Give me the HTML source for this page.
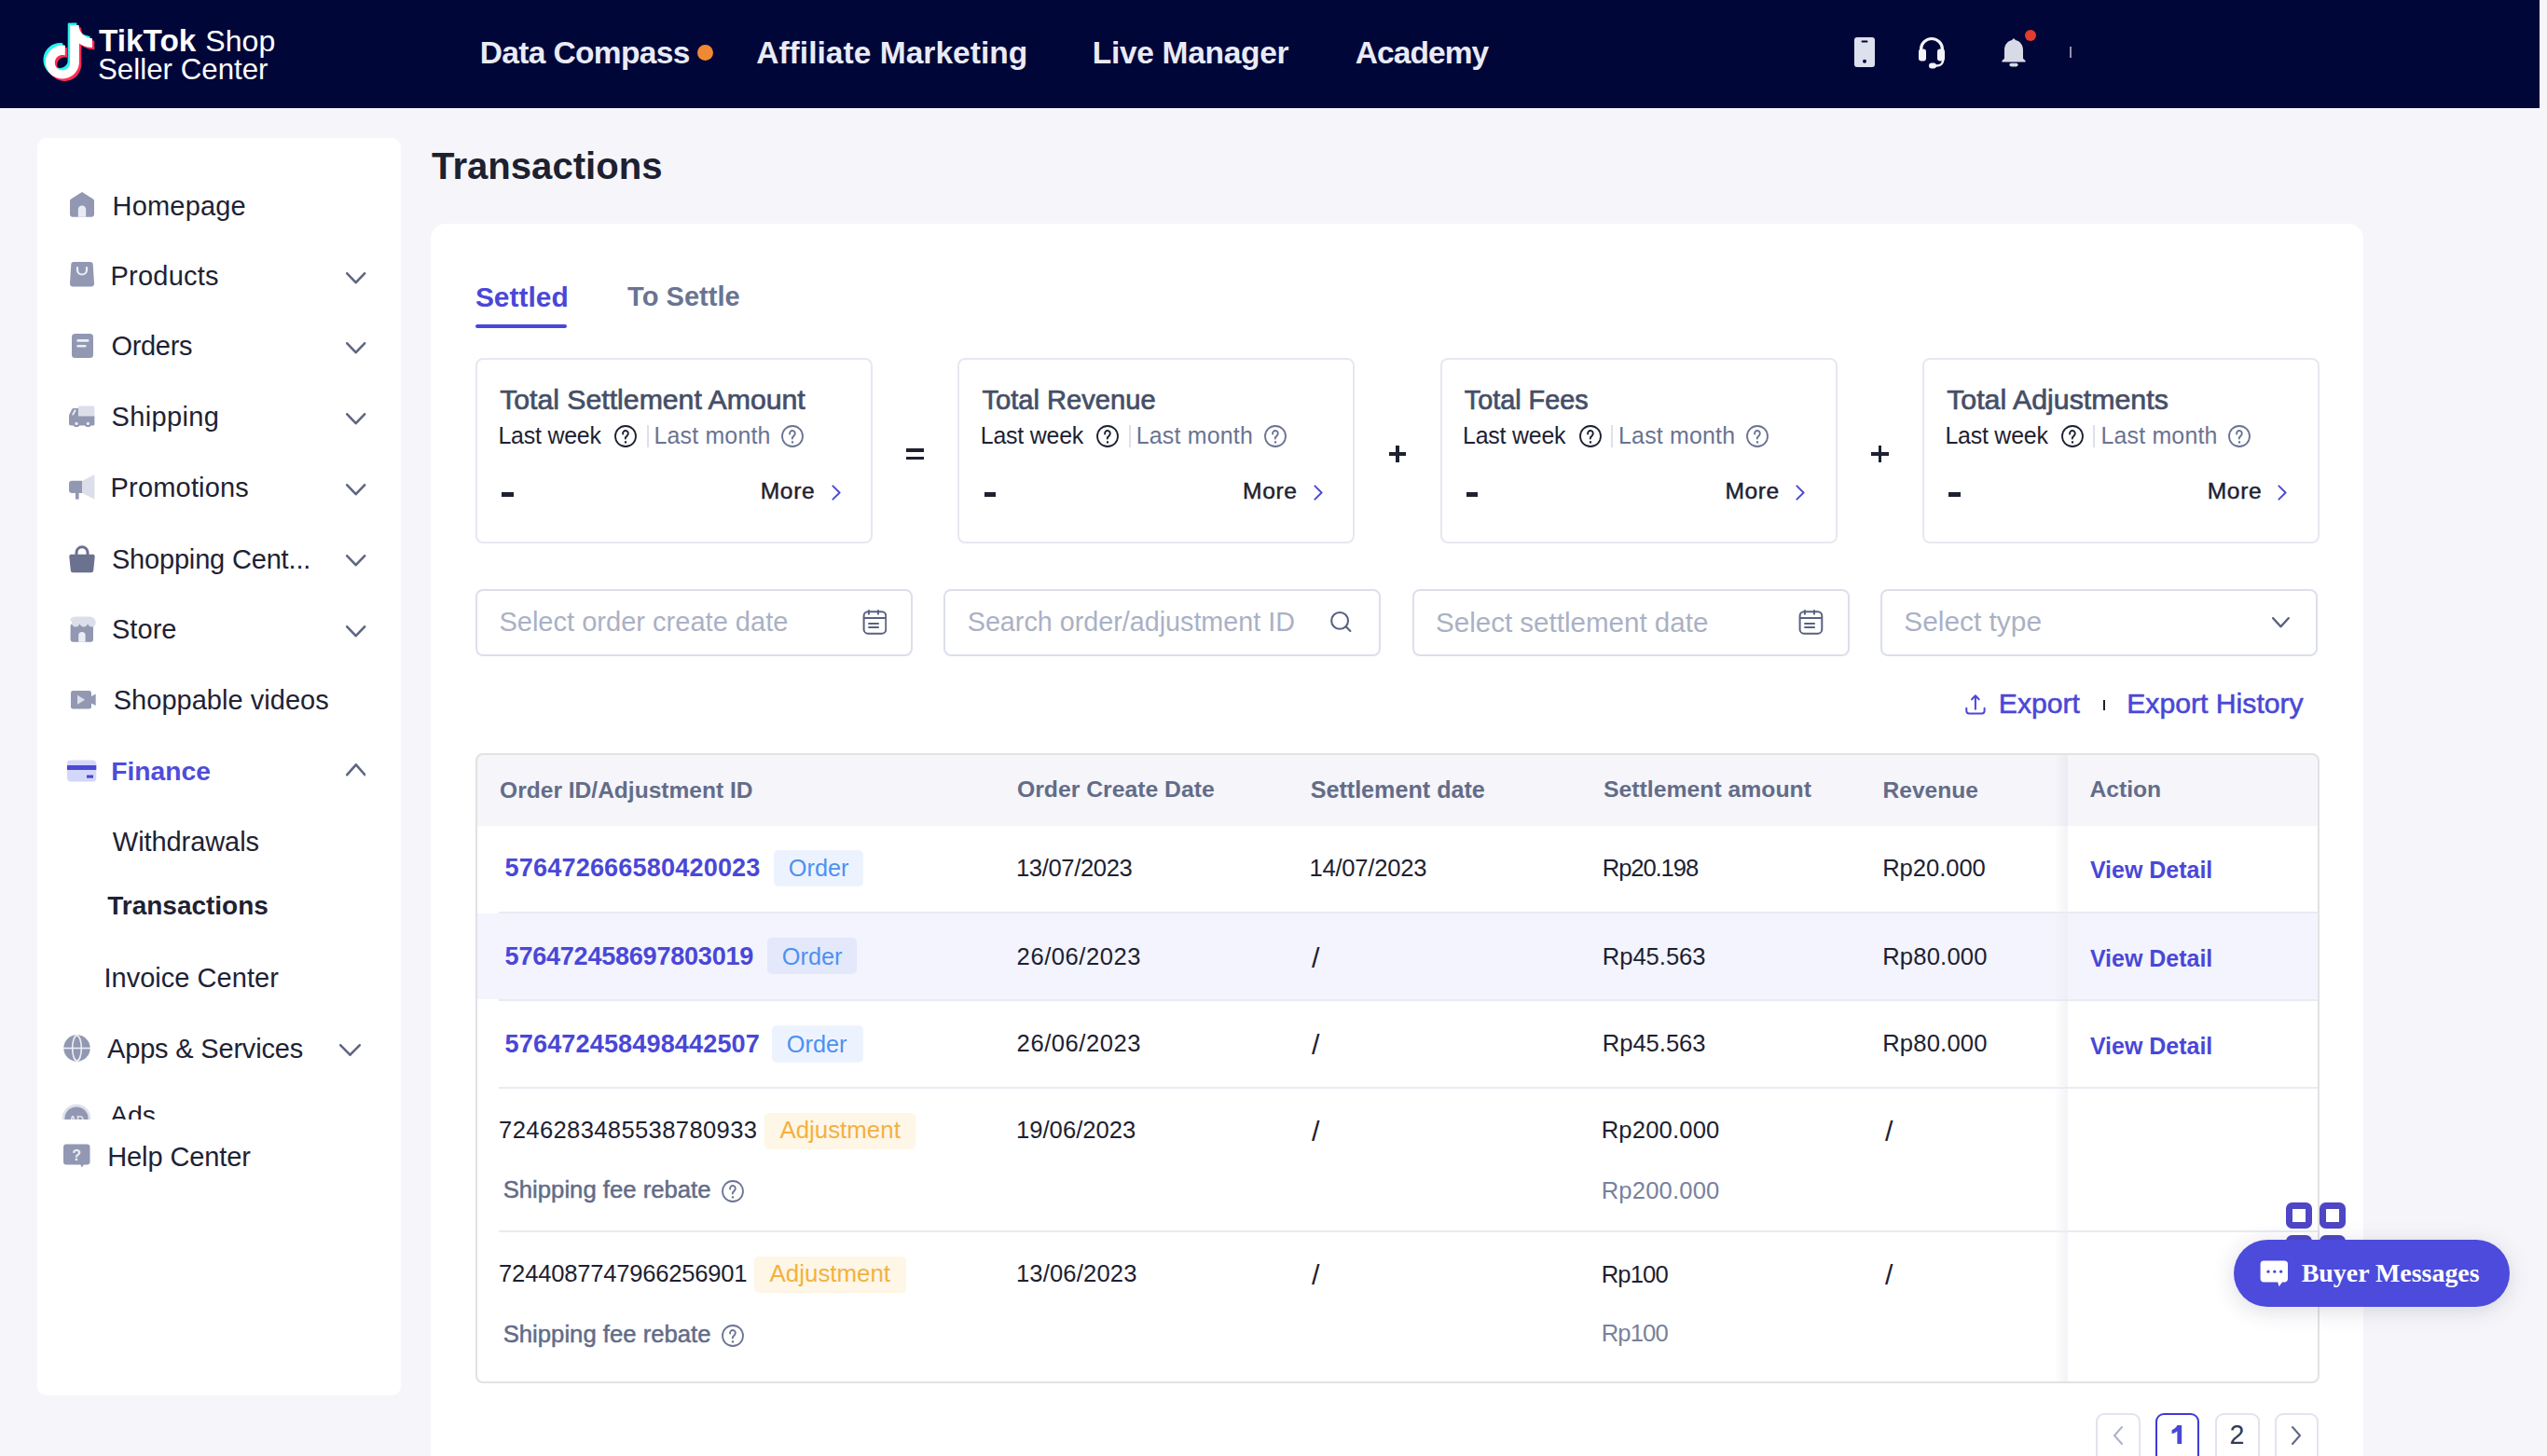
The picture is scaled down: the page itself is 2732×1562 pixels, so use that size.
<!DOCTYPE html>
<html><head><meta charset="utf-8"><title>Transactions</title>
<style>
html,body{margin:0;padding:0;}
html{background:#f6f6fa;}
body{width:2732px;height:1562px;position:relative;overflow:hidden;background:#f6f6fa;font-family:"Liberation Sans",sans-serif;}
.b{position:absolute;display:block;}
.t{position:absolute;white-space:pre;line-height:1;font-family:"Liberation Sans",sans-serif;}
@media (max-width:1500px){body{zoom:0.5;}}
</style></head><body>
<div class="b" style="left:0.00px;top:0.00px;width:2724.00px;height:116.00px;background:#010639"></div>
<svg class="b" style="left:36.00px;top:16.00px;" width="74.00" height="80.00" viewBox="0 0 74.00 80.00">
<g transform="translate(9.1,11)"><g transform="translate(-2.4,-2.4) scale(2.4)"><path d="M12.525.02c1.31-.02 2.61-.01 3.91-.02.08 1.53.63 3.09 1.75 4.17 1.12 1.11 2.7 1.62 4.24 1.79v4.03c-1.44-.05-2.89-.35-4.2-.97-.57-.26-1.1-.59-1.62-.93-.01 2.92.01 5.84-.02 8.75-.08 1.4-.54 2.79-1.35 3.94-1.31 1.92-3.58 3.17-5.91 3.21-1.43.08-2.86-.31-4.08-1.03-2.02-1.19-3.44-3.37-3.65-5.71-.02-.5-.03-1-.01-1.49.18-1.9 1.12-3.72 2.58-4.96 1.66-1.44 3.98-2.13 6.15-1.72.02 1.48-.04 2.96-.04 4.44-.99-.32-2.15-.23-3.02.37-.63.41-1.11 1.04-1.36 1.75-.21.51-.15 1.07-.14 1.61.24 1.64 1.82 3.02 3.5 2.87 1.12-.01 2.19-.66 2.77-1.61.19-.33.4-.67.41-1.06.1-1.79.06-3.57.07-5.36.01-4.03-.01-8.05.02-12.07z" fill="#25f4ee"/></g>
<g transform="translate(2.4,2.4) scale(2.4)"><path d="M12.525.02c1.31-.02 2.61-.01 3.91-.02.08 1.53.63 3.09 1.75 4.17 1.12 1.11 2.7 1.62 4.24 1.79v4.03c-1.44-.05-2.89-.35-4.2-.97-.57-.26-1.1-.59-1.62-.93-.01 2.92.01 5.84-.02 8.75-.08 1.4-.54 2.79-1.35 3.94-1.31 1.92-3.58 3.17-5.91 3.21-1.43.08-2.86-.31-4.08-1.03-2.02-1.19-3.44-3.37-3.65-5.71-.02-.5-.03-1-.01-1.49.18-1.9 1.12-3.72 2.58-4.96 1.66-1.44 3.98-2.13 6.15-1.72.02 1.48-.04 2.96-.04 4.44-.99-.32-2.15-.23-3.02.37-.63.41-1.11 1.04-1.36 1.75-.21.51-.15 1.07-.14 1.61.24 1.64 1.82 3.02 3.5 2.87 1.12-.01 2.19-.66 2.77-1.61.19-.33.4-.67.41-1.06.1-1.79.06-3.57.07-5.36.01-4.03-.01-8.05.02-12.07z" fill="#fe2c55"/></g>
<g transform="scale(2.4)"><path d="M12.525.02c1.31-.02 2.61-.01 3.91-.02.08 1.53.63 3.09 1.75 4.17 1.12 1.11 2.7 1.62 4.24 1.79v4.03c-1.44-.05-2.89-.35-4.2-.97-.57-.26-1.1-.59-1.62-.93-.01 2.92.01 5.84-.02 8.75-.08 1.4-.54 2.79-1.35 3.94-1.31 1.92-3.58 3.17-5.91 3.21-1.43.08-2.86-.31-4.08-1.03-2.02-1.19-3.44-3.37-3.65-5.71-.02-.5-.03-1-.01-1.49.18-1.9 1.12-3.72 2.58-4.96 1.66-1.44 3.98-2.13 6.15-1.72.02 1.48-.04 2.96-.04 4.44-.99-.32-2.15-.23-3.02.37-.63.41-1.11 1.04-1.36 1.75-.21.51-.15 1.07-.14 1.61.24 1.64 1.82 3.02 3.5 2.87 1.12-.01 2.19-.66 2.77-1.61.19-.33.4-.67.41-1.06.1-1.79.06-3.57.07-5.36.01-4.03-.01-8.05.02-12.07z" fill="#fff"/></g></g>
</svg>
<div class="t" style="left:106.07px;top:27.38px;font-size:33.33px;color:#ffffff;font-weight:700;">TikTok</div>
<div class="t" style="left:220.36px;top:28.43px;font-size:32.09px;color:#ffffff;">Shop</div>
<div class="t" style="left:104.99px;top:58.81px;font-size:31.29px;color:#ffffff;">Seller Center</div>
<div class="t" style="left:514.82px;top:39.94px;font-size:33.50px;color:#e9ebf6;font-weight:700;letter-spacing:-0.649px;">Data Compass</div>
<div class="b" style="left:747.5px;top:47.7px;width:17px;height:17px;border-radius:50%;background:#ef8a32"></div>
<div class="t" style="left:811.16px;top:39.94px;font-size:33.50px;color:#e9ebf6;font-weight:700;letter-spacing:0.041px;">Affiliate Marketing</div>
<div class="t" style="left:1171.82px;top:39.94px;font-size:33.50px;color:#e9ebf6;font-weight:700;letter-spacing:-0.308px;">Live Manager</div>
<div class="t" style="left:1453.66px;top:39.94px;font-size:33.50px;color:#e9ebf6;font-weight:700;letter-spacing:-0.900px;">Academy</div>
<svg class="b" style="left:1989.00px;top:40.00px;" width="22.00" height="32.00" viewBox="0 0 22.00 32.00"><rect x="0" y="0" width="22" height="32" rx="3" fill="#dde1ee"/><rect x="7.5" y="3.6" width="7" height="2" rx="1" fill="#010639"/><circle cx="11" cy="25.8" r="2" fill="#010639"/></svg>
<svg class="b" style="left:2056.00px;top:38.00px;" width="32.00" height="36.00" viewBox="0 0 32.00 36.00"><path d="M4.5 18 V15 a11.5 11.5 0 0 1 23 0 V18" fill="none" stroke="#f3f3f8" stroke-width="3.2"/>
<rect x="2" y="14.5" width="8" height="13" rx="3" fill="#f3f3f8"/><rect x="22" y="14.5" width="8" height="13" rx="3" fill="#f3f3f8"/>
<path d="M28.3 26 c0 4-3 6.5-7 6.5 h-3" fill="none" stroke="#f3f3f8" stroke-width="2.4"/><rect x="13" y="29.4" width="8" height="6" rx="3" fill="#f3f3f8"/></svg>
<svg class="b" style="left:2146.00px;top:40.00px;" width="28.00" height="32.00" viewBox="0 0 28.00 32.00"><path d="M14 1.5 c1 0 1.6.7 1.7 1.6 c5 1 8.3 5.2 8.3 10.5 v9.2 l2.4 2.2 c.6.6.2 1.6-.6 1.6 H2.2 c-.8 0-1.2-1-.6-1.6 L4 22.8 v-9.2 c0-5.3 3.3-9.5 8.3-10.5 c.1-.9.7-1.6 1.7-1.6z" fill="#d8dbe6"/><rect x="9.4" y="27.8" width="9.2" height="3.6" rx="1.8" fill="#d8dbe6"/></svg>
<div class="b" style="left:2172px;top:31.9px;width:12px;height:12px;border-radius:50%;background:#e23c30"></div>
<div class="b" style="left:2220.00px;top:50.20px;width:2.00px;height:11.60px;background:#8e93ab"></div>
<div class="b" style="left:40.00px;top:148.00px;width:390.00px;height:1349.00px;background:#fff;border-radius:10px"></div>
<svg class="b" style="left:75.00px;top:205.00px;" width="26.00" height="28.00" viewBox="0 0 26.00 28.00"><path d="M13 1 L24.5 8.3 c1 .6 1.5 1.4 1.5 2.6 V25 c0 1.6-1.2 2.8-2.8 2.8 H2.8 C1.2 27.8 0 26.6 0 25 V10.9 c0-1.2.5-2 1.5-2.6z" fill="#9298b2"/><path d="M8.8 27.8 V19.8 a4.2 4.2 0 0 1 8.4 0 V27.8z" fill="#e8ebf5"/></svg>
<div class="t" style="left:120.58px;top:206.65px;font-size:29.00px;color:#1e2233;letter-spacing:0.174px;">Homepage</div>
<svg class="b" style="left:75.00px;top:281.00px;" width="26.00" height="27.00" viewBox="0 0 26.00 27.00"><path d="M4 0 H22 c1.6 0 2.6 1 2.7 2.5 L26 23 c.1 2-1.2 3.5-3.2 3.5 H3.2 C1.2 26.5-.1 25 0 23 L1.3 2.5 C1.4 1 2.4 0 4 0z" fill="#9298b2"/><path d="M8 6 v2.5 a5 5 0 0 0 10 0 V6" fill="none" stroke="#eceef6" stroke-width="2.2" stroke-linecap="round"/></svg>
<div class="t" style="left:118.58px;top:281.65px;font-size:29.00px;color:#1e2233;letter-spacing:0.204px;">Products</div>
<svg class="b" style="left:371.30px;top:292.00px;" width="21.40" height="12.50" viewBox="0 0 21.40 12.50"><path d="M1.3 1.3 L10.699999999999989 11.2 L20.099999999999977 1.3" fill="none" stroke="#5f6682" stroke-width="2.6" stroke-linecap="round" stroke-linejoin="round"/></svg>
<svg class="b" style="left:76.50px;top:358.00px;" width="23.00" height="26.00" viewBox="0 0 23.00 26.00"><rect x="0" y="0" width="23" height="26" rx="3.5" fill="#9298b2"/><path d="M6.6 7.4 H17.2 M6.6 13.2 H14.3" stroke="#eceef6" stroke-width="2.6" stroke-linecap="round"/></svg>
<div class="t" style="left:119.59px;top:356.65px;font-size:29.00px;color:#1e2233;letter-spacing:-0.355px;">Orders</div>
<svg class="b" style="left:371.30px;top:367.00px;" width="21.40" height="12.50" viewBox="0 0 21.40 12.50"><path d="M1.3 1.3 L10.699999999999989 11.2 L20.099999999999977 1.3" fill="none" stroke="#5f6682" stroke-width="2.6" stroke-linecap="round" stroke-linejoin="round"/></svg>
<svg class="b" style="left:74.00px;top:435.00px;" width="28.00" height="24.00" viewBox="0 0 28.00 24.00"><rect x="9.8" y="0.6" width="17.6" height="12" rx="2.4" fill="#dcdfea"/><path d="M5 3 H10 V11.5 H27.4 V20 c0 .8-.6 1.5-1.4 1.5 H2 C.9 21.5 0 20.6 0 19.5 V11 c0-.6.2-1.2.5-1.8 L3.2 4 C3.6 3.3 4.2 3 5 3z" fill="#9298b2"/><circle cx="8" cy="19.4" r="3.6" fill="#9298b2" stroke="#fff" stroke-width="0"/><circle cx="20.4" cy="19.4" r="3.6" fill="#9298b2"/><circle cx="8" cy="19.4" r="1.6" fill="#eceef6"/><circle cx="20.4" cy="19.4" r="1.6" fill="#eceef6"/><path d="M4.2 9.6 L6.6 5.2" stroke="#eceef6" stroke-width="1.8" stroke-linecap="round"/></svg>
<div class="t" style="left:119.59px;top:433.45px;font-size:29.00px;color:#1e2233;letter-spacing:0.340px;">Shipping</div>
<svg class="b" style="left:371.30px;top:443.00px;" width="21.40" height="12.50" viewBox="0 0 21.40 12.50"><path d="M1.3 1.3 L10.699999999999989 11.2 L20.099999999999977 1.3" fill="none" stroke="#5f6682" stroke-width="2.6" stroke-linecap="round" stroke-linejoin="round"/></svg>
<svg class="b" style="left:74.00px;top:509.00px;" width="28.00" height="27.00" viewBox="0 0 28.00 27.00"><path d="M14 7 L27.4 0 V26.6 L14 20z" fill="#dcdfea"/><path d="M3 6.8 H14 V20 H3 c-1.6 0-3-1.3-3-3 V9.8 C0 8.1 1.4 6.8 3 6.8z" fill="#9298b2"/><rect x="7" y="20" width="3.6" height="6.6" fill="#9298b2"/></svg>
<div class="t" style="left:118.58px;top:509.05px;font-size:29.00px;color:#1e2233;letter-spacing:0.177px;">Promotions</div>
<svg class="b" style="left:371.30px;top:519.00px;" width="21.40" height="12.50" viewBox="0 0 21.40 12.50"><path d="M1.3 1.3 L10.699999999999989 11.2 L20.099999999999977 1.3" fill="none" stroke="#5f6682" stroke-width="2.6" stroke-linecap="round" stroke-linejoin="round"/></svg>
<svg class="b" style="left:74.00px;top:585.00px;" width="28.00" height="30.00" viewBox="0 0 28.00 30.00"><path d="M8 10 V7.8 a6 6 0 0 1 12 0 V10" fill="none" stroke="#6b7290" stroke-width="3"/><path d="M2.3 9.8 H25.7 c1.3 0 2.2 1.1 2 2.4 L26.2 27 c-.2 1.3-1.2 2.3-2.5 2.3 H4.3 c-1.3 0-2.3-1-2.5-2.3 L.3 12.2 C.1 10.9 1 9.8 2.3 9.8z" fill="#6b7290"/></svg>
<div class="t" style="left:119.89px;top:585.65px;font-size:29.00px;color:#1e2233;letter-spacing:-0.173px;">Shopping Cent...</div>
<svg class="b" style="left:371.30px;top:595.00px;" width="21.40" height="12.50" viewBox="0 0 21.40 12.50"><path d="M1.3 1.3 L10.699999999999989 11.2 L20.099999999999977 1.3" fill="none" stroke="#5f6682" stroke-width="2.6" stroke-linecap="round" stroke-linejoin="round"/></svg>
<svg class="b" style="left:73.00px;top:661.00px;" width="30.00" height="28.00" viewBox="0 0 30.00 28.00"><rect x="2.6" y="8" width="24.4" height="19.8" rx="3" fill="#9298b2"/><path d="M7 0.4 H23 c3 0 6 2.8 6 5.8 V7.2 a4.3 4.3 0 0 1-8.6 0 a4.3 4.3 0 0 1-8.6 0 a4.3 4.3 0 0 1-8.6 0 V6.2 C-.2 3.2 3.5 0.4 7 0.4z" fill="#dcdfea" transform="translate(.7,0)"/><path d="M11.2 27.8 V20.8 a3.7 3.7 0 0 1 7.4 0 V27.8z" fill="#eceef6"/></svg>
<div class="t" style="left:119.89px;top:661.15px;font-size:29.00px;color:#1e2233;letter-spacing:0.075px;">Store</div>
<svg class="b" style="left:371.30px;top:671.00px;" width="21.40" height="12.50" viewBox="0 0 21.40 12.50"><path d="M1.3 1.3 L10.699999999999989 11.2 L20.099999999999977 1.3" fill="none" stroke="#5f6682" stroke-width="2.6" stroke-linecap="round" stroke-linejoin="round"/></svg>
<svg class="b" style="left:76.00px;top:741.00px;" width="27.00" height="20.00" viewBox="0 0 27.00 20.00"><rect x="0" y="0" width="22" height="19.6" rx="2.4" fill="#9298b2"/><path d="M22 6 L26.7 3.6 V16 L22 13.6z" fill="#9298b2"/><path d="M7 4.8 L15.2 9.8 L7 14.8z" fill="#dcdfea"/></svg>
<div class="t" style="left:121.69px;top:736.65px;font-size:29.00px;color:#1e2233;letter-spacing:0.031px;">Shoppable videos</div>
<svg class="b" style="left:72.00px;top:815.00px;" width="32.00" height="24.00" viewBox="0 0 32.00 24.00"><rect x="0" y="0.5" width="31.3" height="23" rx="4" fill="#d3d7fa"/><rect x="0" y="6" width="31.3" height="5" fill="#4a47d7"/><rect x="21" y="16.5" width="7" height="3.2" fill="#4a47d7"/></svg>
<div class="t" style="left:119.16px;top:812.77px;font-size:28.26px;color:#4f4cdb;font-weight:700;">Finance</div>
<svg class="b" style="left:370.80px;top:819.00px;" width="21.70" height="13.50" viewBox="0 0 21.70 13.50"><path d="M1.3 12.2 L10.849999999999994 1.3 L20.399999999999988 12.2" fill="none" stroke="#5f6682" stroke-width="2.6" stroke-linecap="round" stroke-linejoin="round"/></svg>
<div class="t" style="left:120.86px;top:888.65px;font-size:29.00px;color:#1e2233;letter-spacing:-0.075px;">Withdrawals</div>
<div class="t" style="left:115.22px;top:958.00px;font-size:27.99px;color:#1e2233;font-weight:700;">Transactions</div>
<div class="t" style="left:111.39px;top:1035.35px;font-size:29.00px;color:#1e2233;letter-spacing:0.034px;">Invoice Center</div>
<svg class="b" style="left:67.50px;top:1109.50px;" width="29.00" height="29.00" viewBox="0 0 29.00 29.00"><circle cx="14.5" cy="14.5" r="14.2" fill="#9298b2"/><path d="M0 14.5 H29" stroke="#eceef6" stroke-width="1.6"/><ellipse cx="14.5" cy="14.5" rx="4.8" ry="13.6" fill="none" stroke="#eceef6" stroke-width="1.6"/></svg>
<div class="t" style="left:115.10px;top:1110.65px;font-size:29.00px;color:#1e2233;letter-spacing:-0.193px;">Apps & Services</div>
<svg class="b" style="left:364.00px;top:1120.00px;" width="23.00" height="13.00" viewBox="0 0 23.00 13.00"><path d="M1.3 1.3 L11.5 11.7 L21.7 1.3" fill="none" stroke="#5f6682" stroke-width="2.6" stroke-linecap="round" stroke-linejoin="round"/></svg>
<div class="b" style="left:40px;top:1180px;width:390px;height:20.8px;overflow:hidden">
<svg class="b" style="left:26.00px;top:3.80px;" width="32.00" height="32.20" viewBox="0 0 32.00 32.20"><circle cx="16" cy="16" r="15.4" fill="#dfe2ee"/><circle cx="16" cy="16" r="12.6" fill="#9298b2"/><text x="16" y="21" font-size="11" font-weight="700" fill="#dfe2ee" text-anchor="middle" font-family="Liberation Sans">AD</text></svg>
<div class="t" style="left:78px;top:1.5px;font-size:28.5px;color:#1e2233">Ads</div>
</div>
<svg class="b" style="left:67.50px;top:1227.00px;" width="29.00" height="26.00" viewBox="0 0 29.00 26.00"><path d="M3 0.5 H25.5 c1.7 0 3 1.3 3 3 V19.5 c0 1.7-1.3 3-3 3 H22 L19.5 25.5 L18.5 22.5 H3 c-1.7 0-3-1.3-3-3 V3.5 C0 1.8 1.3.5 3 .5z" fill="#9298b2"/><text x="14.2" y="17.5" font-size="16" font-weight="700" fill="#eceef6" text-anchor="middle" font-family="Liberation Sans">?</text></svg>
<div class="t" style="left:115.18px;top:1226.65px;font-size:29.00px;color:#1e2233;letter-spacing:-0.096px;">Help Center</div>
<div class="t" style="left:463.10px;top:158.34px;font-size:40.11px;color:#1d2130;font-weight:700;">Transactions</div>
<div class="b" style="left:462.00px;top:240.00px;width:2073.00px;height:1460.00px;background:#fff;border-radius:16px"></div>
<div class="t" style="left:509.90px;top:303.65px;font-size:29.94px;color:#4a47d7;font-weight:700;">Settled</div>
<div class="b" style="left:510.00px;top:348.00px;width:98.00px;height:4.00px;background:#4a47d7;border-radius:2px"></div>
<div class="t" style="left:673.11px;top:304.38px;font-size:29.07px;color:#6a7491;font-weight:700;">To Settle</div>
<div class="b" style="left:510.00px;top:384.00px;width:426.00px;height:199.00px;border:2px solid #e6e8f0;border-radius:8px;box-sizing:border-box"></div>
<div class="t" style="left:536.15px;top:413.90px;font-size:30.23px;color:#454e67;-webkit-text-stroke:0.7px #454e67;">Total Settlement Amount</div>
<div class="t" style="left:534.41px;top:455.12px;font-size:24.90px;color:#1d2130;letter-spacing:-0.198px;">Last week</div>
<svg class="b" style="left:658.90px;top:455.80px;" width="24.00" height="24.00" viewBox="0 0 24.00 24.00"><circle cx="12.0" cy="12.0" r="11.0" fill="none" stroke="#1d2130" stroke-width="1.8"/><path d="M9.12 9.60 a2.88 2.88 0 1 1 4.80 1.44 c-.4 .9-1.3 1.3-1.8 2.1 -.3.4-.3.8-.3 1.4" fill="none" stroke="#1d2130" stroke-width="1.9" stroke-linecap="round"/><rect x="10.90" y="17.28" width="2.2" height="2.2" fill="#1d2130"/></svg>
<div class="b" style="left:693.50px;top:456.20px;width:2.00px;height:23.50px;background:#dde0ee"></div>
<div class="t" style="left:701.41px;top:455.12px;font-size:24.90px;color:#6a7391;letter-spacing:0.209px;">Last month</div>
<svg class="b" style="left:838.20px;top:455.80px;" width="24.00" height="24.00" viewBox="0 0 24.00 24.00"><circle cx="12.0" cy="12.0" r="11.0" fill="none" stroke="#6a7391" stroke-width="1.8"/><path d="M9.12 9.60 a2.88 2.88 0 1 1 4.80 1.44 c-.4 .9-1.3 1.3-1.8 2.1 -.3.4-.3.8-.3 1.4" fill="none" stroke="#6a7391" stroke-width="1.9" stroke-linecap="round"/><rect x="10.90" y="17.28" width="2.2" height="2.2" fill="#6a7391"/></svg>
<div class="b" style="left:538.40px;top:528.00px;width:12.30px;height:5.00px;background:#1d2130"></div>
<div class="t" style="left:815.76px;top:515.07px;font-size:24.60px;color:#1d2130;-webkit-text-stroke:0.45px #1d2130;letter-spacing:0.620px;">More</div>
<svg class="b" style="left:891.50px;top:519.50px;" width="10.00" height="17.00" viewBox="0 0 10.00 17.00"><path d="M1.4 1.3 L8.6 8.5 L1.4 15.7" fill="none" stroke="#4a47d7" stroke-width="1.9" stroke-linecap="round" stroke-linejoin="round"/></svg>
<div class="b" style="left:1027.00px;top:384.00px;width:426.00px;height:199.00px;border:2px solid #e6e8f0;border-radius:8px;box-sizing:border-box"></div>
<div class="t" style="left:1053.50px;top:414.86px;font-size:29.11px;color:#454e67;-webkit-text-stroke:0.7px #454e67;">Total Revenue</div>
<div class="t" style="left:1051.74px;top:455.12px;font-size:24.90px;color:#1d2130;letter-spacing:-0.198px;">Last week</div>
<svg class="b" style="left:1176.23px;top:455.80px;" width="24.00" height="24.00" viewBox="0 0 24.00 24.00"><circle cx="12.0" cy="12.0" r="11.0" fill="none" stroke="#1d2130" stroke-width="1.8"/><path d="M9.12 9.60 a2.88 2.88 0 1 1 4.80 1.44 c-.4 .9-1.3 1.3-1.8 2.1 -.3.4-.3.8-.3 1.4" fill="none" stroke="#1d2130" stroke-width="1.9" stroke-linecap="round"/><rect x="10.90" y="17.28" width="2.2" height="2.2" fill="#1d2130"/></svg>
<div class="b" style="left:1210.83px;top:456.20px;width:2.00px;height:23.50px;background:#dde0ee"></div>
<div class="t" style="left:1218.74px;top:455.12px;font-size:24.90px;color:#6a7391;letter-spacing:0.209px;">Last month</div>
<svg class="b" style="left:1355.53px;top:455.80px;" width="24.00" height="24.00" viewBox="0 0 24.00 24.00"><circle cx="12.0" cy="12.0" r="11.0" fill="none" stroke="#6a7391" stroke-width="1.8"/><path d="M9.12 9.60 a2.88 2.88 0 1 1 4.80 1.44 c-.4 .9-1.3 1.3-1.8 2.1 -.3.4-.3.8-.3 1.4" fill="none" stroke="#6a7391" stroke-width="1.9" stroke-linecap="round"/><rect x="10.90" y="17.28" width="2.2" height="2.2" fill="#6a7391"/></svg>
<div class="b" style="left:1055.73px;top:528.00px;width:12.30px;height:5.00px;background:#1d2130"></div>
<div class="t" style="left:1333.09px;top:515.07px;font-size:24.60px;color:#1d2130;-webkit-text-stroke:0.45px #1d2130;letter-spacing:0.620px;">More</div>
<svg class="b" style="left:1408.83px;top:519.50px;" width="10.00" height="17.00" viewBox="0 0 10.00 17.00"><path d="M1.4 1.3 L8.6 8.5 L1.4 15.7" fill="none" stroke="#4a47d7" stroke-width="1.9" stroke-linecap="round" stroke-linejoin="round"/></svg>
<div class="b" style="left:1545.00px;top:384.00px;width:426.00px;height:199.00px;border:2px solid #e6e8f0;border-radius:8px;box-sizing:border-box"></div>
<div class="t" style="left:1570.83px;top:415.12px;font-size:28.79px;color:#454e67;-webkit-text-stroke:0.7px #454e67;">Total Fees</div>
<div class="t" style="left:1569.07px;top:455.12px;font-size:24.90px;color:#1d2130;letter-spacing:-0.198px;">Last week</div>
<svg class="b" style="left:1693.56px;top:455.80px;" width="24.00" height="24.00" viewBox="0 0 24.00 24.00"><circle cx="12.0" cy="12.0" r="11.0" fill="none" stroke="#1d2130" stroke-width="1.8"/><path d="M9.12 9.60 a2.88 2.88 0 1 1 4.80 1.44 c-.4 .9-1.3 1.3-1.8 2.1 -.3.4-.3.8-.3 1.4" fill="none" stroke="#1d2130" stroke-width="1.9" stroke-linecap="round"/><rect x="10.90" y="17.28" width="2.2" height="2.2" fill="#1d2130"/></svg>
<div class="b" style="left:1728.16px;top:456.20px;width:2.00px;height:23.50px;background:#dde0ee"></div>
<div class="t" style="left:1736.07px;top:455.12px;font-size:24.90px;color:#6a7391;letter-spacing:0.209px;">Last month</div>
<svg class="b" style="left:1872.86px;top:455.80px;" width="24.00" height="24.00" viewBox="0 0 24.00 24.00"><circle cx="12.0" cy="12.0" r="11.0" fill="none" stroke="#6a7391" stroke-width="1.8"/><path d="M9.12 9.60 a2.88 2.88 0 1 1 4.80 1.44 c-.4 .9-1.3 1.3-1.8 2.1 -.3.4-.3.8-.3 1.4" fill="none" stroke="#6a7391" stroke-width="1.9" stroke-linecap="round"/><rect x="10.90" y="17.28" width="2.2" height="2.2" fill="#6a7391"/></svg>
<div class="b" style="left:1573.06px;top:528.00px;width:12.30px;height:5.00px;background:#1d2130"></div>
<div class="t" style="left:1850.42px;top:515.07px;font-size:24.60px;color:#1d2130;-webkit-text-stroke:0.45px #1d2130;letter-spacing:0.620px;">More</div>
<svg class="b" style="left:1926.16px;top:519.50px;" width="10.00" height="17.00" viewBox="0 0 10.00 17.00"><path d="M1.4 1.3 L8.6 8.5 L1.4 15.7" fill="none" stroke="#4a47d7" stroke-width="1.9" stroke-linecap="round" stroke-linejoin="round"/></svg>
<div class="b" style="left:2062.00px;top:384.00px;width:426.00px;height:199.00px;border:2px solid #e6e8f0;border-radius:8px;box-sizing:border-box"></div>
<div class="t" style="left:2088.13px;top:413.81px;font-size:30.34px;color:#454e67;-webkit-text-stroke:0.7px #454e67;">Total Adjustments</div>
<div class="t" style="left:2086.40px;top:455.12px;font-size:24.90px;color:#1d2130;letter-spacing:-0.198px;">Last week</div>
<svg class="b" style="left:2210.89px;top:455.80px;" width="24.00" height="24.00" viewBox="0 0 24.00 24.00"><circle cx="12.0" cy="12.0" r="11.0" fill="none" stroke="#1d2130" stroke-width="1.8"/><path d="M9.12 9.60 a2.88 2.88 0 1 1 4.80 1.44 c-.4 .9-1.3 1.3-1.8 2.1 -.3.4-.3.8-.3 1.4" fill="none" stroke="#1d2130" stroke-width="1.9" stroke-linecap="round"/><rect x="10.90" y="17.28" width="2.2" height="2.2" fill="#1d2130"/></svg>
<div class="b" style="left:2245.49px;top:456.20px;width:2.00px;height:23.50px;background:#dde0ee"></div>
<div class="t" style="left:2253.40px;top:455.12px;font-size:24.90px;color:#6a7391;letter-spacing:0.209px;">Last month</div>
<svg class="b" style="left:2390.19px;top:455.80px;" width="24.00" height="24.00" viewBox="0 0 24.00 24.00"><circle cx="12.0" cy="12.0" r="11.0" fill="none" stroke="#6a7391" stroke-width="1.8"/><path d="M9.12 9.60 a2.88 2.88 0 1 1 4.80 1.44 c-.4 .9-1.3 1.3-1.8 2.1 -.3.4-.3.8-.3 1.4" fill="none" stroke="#6a7391" stroke-width="1.9" stroke-linecap="round"/><rect x="10.90" y="17.28" width="2.2" height="2.2" fill="#6a7391"/></svg>
<div class="b" style="left:2090.39px;top:528.00px;width:12.30px;height:5.00px;background:#1d2130"></div>
<div class="t" style="left:2367.75px;top:515.07px;font-size:24.60px;color:#1d2130;-webkit-text-stroke:0.45px #1d2130;letter-spacing:0.620px;">More</div>
<svg class="b" style="left:2443.49px;top:519.50px;" width="10.00" height="17.00" viewBox="0 0 10.00 17.00"><path d="M1.4 1.3 L8.6 8.5 L1.4 15.7" fill="none" stroke="#4a47d7" stroke-width="1.9" stroke-linecap="round" stroke-linejoin="round"/></svg>
<div class="b" style="left:972.30px;top:481.00px;width:18.50px;height:3.50px;background:#1d2130"></div>
<div class="b" style="left:972.30px;top:489.90px;width:18.50px;height:3.50px;background:#1d2130"></div>
<div class="b" style="left:1489.60px;top:485.20px;width:18.80px;height:3.60px;background:#1d2130"></div>
<div class="b" style="left:1497.20px;top:477.60px;width:3.60px;height:18.90px;background:#1d2130"></div>
<div class="b" style="left:2007.10px;top:485.20px;width:18.80px;height:3.60px;background:#1d2130"></div>
<div class="b" style="left:2014.70px;top:477.60px;width:3.60px;height:18.90px;background:#1d2130"></div>
<div class="b" style="left:510.00px;top:632.00px;width:469.00px;height:72.00px;border:2px solid #dcdfec;border-radius:8px;box-sizing:border-box"></div>
<div class="t" style="left:535.39px;top:653.10px;font-size:29.05px;color:#aab1c5;">Select order create date</div>
<svg class="b" style="left:924.60px;top:653.00px;" width="26.40" height="28.00" viewBox="0 0 26.40 28.00"><rect x="1.6" y="3.2" width="23.7" height="23.5" rx="4.5" fill="none" stroke="#5a6180" stroke-width="2"/><path d="M1.6 9.9 H25.3 M6.9 1.2 V6.6 M16.9 1.2 V6.6 M6.3 15.9 H17.8 M6.3 19.9 H17.8" stroke="#5a6180" stroke-width="2"/></svg>
<div class="b" style="left:1012.00px;top:632.00px;width:469.00px;height:72.00px;border:2px solid #dcdfec;border-radius:8px;box-sizing:border-box"></div>
<div class="t" style="left:1037.74px;top:653.38px;font-size:28.73px;color:#aab1c5;">Search order/adjustment ID</div>
<svg class="b" style="left:1425.33px;top:654.00px;" width="27.00" height="28.00" viewBox="0 0 27.00 28.00"><circle cx="12.1" cy="11.9" r="8.9" fill="none" stroke="#5a6180" stroke-width="2.1"/><path d="M19 18.6 L23.4 23" stroke="#5a6180" stroke-width="2.1" stroke-linecap="round"/></svg>
<div class="b" style="left:1515.00px;top:632.00px;width:469.00px;height:72.00px;border:2px solid #dcdfec;border-radius:8px;box-sizing:border-box"></div>
<div class="t" style="left:1540.03px;top:652.67px;font-size:29.56px;color:#aab1c5;">Select settlement date</div>
<svg class="b" style="left:1929.26px;top:653.00px;" width="26.40" height="28.00" viewBox="0 0 26.40 28.00"><rect x="1.6" y="3.2" width="23.7" height="23.5" rx="4.5" fill="none" stroke="#5a6180" stroke-width="2"/><path d="M1.6 9.9 H25.3 M6.9 1.2 V6.6 M16.9 1.2 V6.6 M6.3 15.9 H17.8 M6.3 19.9 H17.8" stroke="#5a6180" stroke-width="2"/></svg>
<div class="b" style="left:2017.00px;top:632.00px;width:469.00px;height:72.00px;border:2px solid #dcdfec;border-radius:8px;box-sizing:border-box"></div>
<div class="t" style="left:2042.35px;top:652.43px;font-size:29.85px;color:#aab1c5;">Select type</div>
<svg class="b" style="left:2436.69px;top:662.40px;" width="18.90" height="11.40" viewBox="0 0 18.90 11.40"><path d="M1.2 1.2 L9.450000000000045 10.199999999999978 L17.70000000000009 1.2" fill="none" stroke="#5a6180" stroke-width="2.4" stroke-linecap="round" stroke-linejoin="round"/></svg>
<svg class="b" style="left:2107.00px;top:744.00px;" width="25.00" height="24.00" viewBox="0 0 25.00 24.00"><path d="M11.9 2.3 V16.8 M8 6.2 L11.9 2.3 L15.7 6.2" fill="none" stroke="#4a47d7" stroke-width="2" stroke-linecap="round" stroke-linejoin="round"/><path d="M2.3 15.7 V18.5 c0 1.7 1.3 3 3 3 H18.6 c1.7 0 3-1.3 3-3 V15.7" fill="none" stroke="#4a47d7" stroke-width="2" stroke-linecap="round"/></svg>
<div class="t" style="left:2143.76px;top:739.73px;font-size:30.20px;color:#4a47d7;-webkit-text-stroke:0.55px #4a47d7;">Export</div>
<div class="b" style="left:2256.00px;top:750.70px;width:2.40px;height:11.30px;background:#1d2130"></div>
<div class="t" style="left:2281.16px;top:739.74px;font-size:30.19px;color:#4a47d7;-webkit-text-stroke:0.55px #4a47d7;">Export History</div>
<div class="b" style="left:510px;top:808px;width:1978px;height:676px;border-radius:8px;overflow:hidden;background:#fff">
<div class="b" style="left:0;top:0;width:100%;height:77.50px;background:#f5f5fa"></div>
<div class="b" style="left:0;top:172px;width:100%;height:92px;background:#f3f4fd"></div>
<div class="b" style="left:25.00px;top:170.00px;width:1953.00px;height:2px;background:#e9ebf2"></div>
<div class="b" style="left:25.00px;top:263.50px;width:1953.00px;height:2px;background:#e9ebf2"></div>
<div class="b" style="left:25.00px;top:357.50px;width:1953.00px;height:2px;background:#e9ebf2"></div>
<div class="b" style="left:25.00px;top:512.00px;width:1953.00px;height:2px;background:#e9ebf2"></div>
<div class="b" style="left:1693.00px;top:77.5px;width:15px;height:598.50px;background:linear-gradient(90deg,rgba(235,236,242,0),rgba(235,236,242,.6))"></div>
<div class="b" style="left:1693.00px;top:0px;width:15px;height:77.5px;background:linear-gradient(90deg,rgba(228,229,238,0),rgba(228,229,238,.6))"></div>
</div>
<div class="b" style="left:510.00px;top:808.00px;width:1978.00px;height:676.00px;border:2px solid #e2e2e4;border-radius:8px;box-sizing:border-box"></div>
<div class="t" style="left:536.12px;top:835.60px;font-size:24.56px;color:#636c89;font-weight:700;">Order ID/Adjustment ID</div>
<div class="t" style="left:1090.91px;top:835.44px;font-size:24.75px;color:#636c89;font-weight:700;">Order Create Date</div>
<div class="t" style="left:1405.65px;top:835.11px;font-size:25.15px;color:#636c89;font-weight:700;">Settlement date</div>
<div class="t" style="left:1720.06px;top:835.42px;font-size:24.78px;color:#636c89;font-weight:700;">Settlement amount</div>
<div class="t" style="left:2019.60px;top:835.61px;font-size:24.55px;color:#636c89;font-weight:700;">Revenue</div>
<div class="t" style="left:2241.38px;top:835.49px;font-size:24.69px;color:#636c89;font-weight:700;">Action</div>
<div class="t" style="left:541.59px;top:917.25px;font-size:27.10px;color:#4a47d7;font-weight:700;letter-spacing:0.152px;">576472666580420023</div>
<div class="b" style="left:830.40px;top:912.30px;width:96.10px;height:39.20px;background:#edf3fe;border-radius:5px"></div>
<div class="t" style="left:845.86px;top:918.82px;font-size:25.25px;color:#4d90f2;">Order</div>
<div class="t" style="left:1089.98px;top:918.52px;font-size:25.60px;color:#1d2130;letter-spacing:-0.365px;">13/07/2023</div>
<div class="t" style="left:1404.48px;top:918.52px;font-size:25.60px;color:#1d2130;letter-spacing:-0.243px;">14/07/2023</div>
<div class="t" style="left:1718.75px;top:918.52px;font-size:25.60px;color:#1d2130;letter-spacing:-1.086px;">Rp20.198</div>
<div class="t" style="left:2019.15px;top:918.52px;font-size:25.60px;color:#1d2130;letter-spacing:-0.047px;">Rp20.000</div>
<div class="t" style="left:2241.88px;top:921.46px;font-size:24.97px;color:#4a47d7;font-weight:700;">View Detail</div>
<div class="t" style="left:541.59px;top:1012.25px;font-size:27.10px;color:#4a47d7;font-weight:700;letter-spacing:-0.265px;">576472458697803019</div>
<div class="b" style="left:823.30px;top:1006.00px;width:96.10px;height:39.20px;background:#e3e9fa;border-radius:5px"></div>
<div class="t" style="left:838.86px;top:1013.82px;font-size:25.25px;color:#4d90f2;">Order</div>
<div class="t" style="left:1090.62px;top:1013.52px;font-size:25.60px;color:#1d2130;letter-spacing:0.542px;">26/06/2023</div>
<div class="t" style="left:1407.00px;top:1012.50px;font-size:30.36px;color:#1d2130;">/</div>
<div class="t" style="left:1718.75px;top:1013.52px;font-size:25.60px;color:#1d2130;letter-spacing:-0.029px;">Rp45.563</div>
<div class="t" style="left:2019.15px;top:1013.52px;font-size:25.60px;color:#1d2130;letter-spacing:0.195px;">Rp80.000</div>
<div class="t" style="left:2241.88px;top:1016.46px;font-size:24.97px;color:#4a47d7;font-weight:700;">View Detail</div>
<div class="t" style="left:541.59px;top:1106.05px;font-size:27.10px;color:#4a47d7;font-weight:700;letter-spacing:0.119px;">576472458498442507</div>
<div class="b" style="left:828.30px;top:1100.40px;width:97.50px;height:39.20px;background:#edf3fe;border-radius:5px"></div>
<div class="t" style="left:843.86px;top:1107.62px;font-size:25.25px;color:#4d90f2;">Order</div>
<div class="t" style="left:1090.62px;top:1107.32px;font-size:25.60px;color:#1d2130;letter-spacing:0.542px;">26/06/2023</div>
<div class="t" style="left:1407.00px;top:1106.30px;font-size:30.36px;color:#1d2130;">/</div>
<div class="t" style="left:1718.75px;top:1107.32px;font-size:25.60px;color:#1d2130;letter-spacing:-0.029px;">Rp45.563</div>
<div class="t" style="left:2019.15px;top:1107.32px;font-size:25.60px;color:#1d2130;letter-spacing:0.195px;">Rp80.000</div>
<div class="t" style="left:2241.88px;top:1110.26px;font-size:24.97px;color:#4a47d7;font-weight:700;">View Detail</div>
<div class="t" style="left:535.12px;top:1200.32px;font-size:25.60px;color:#1d2130;letter-spacing:0.358px;">7246283485538780933</div>
<div class="b" style="left:820.00px;top:1194.40px;width:161.60px;height:38.90px;background:#fef6e6;border-radius:5px"></div>
<div class="t" style="left:836.40px;top:1200.08px;font-size:25.89px;color:#f3b13f;">Adjustment</div>
<div class="t" style="left:1089.98px;top:1200.32px;font-size:25.60px;color:#1d2130;letter-spacing:0.024px;">19/06/2023</div>
<div class="t" style="left:1407.00px;top:1199.30px;font-size:30.36px;color:#1d2130;">/</div>
<div class="t" style="left:1717.65px;top:1200.32px;font-size:25.60px;color:#1d2130;letter-spacing:0.183px;">Rp200.000</div>
<div class="t" style="left:2022.00px;top:1199.30px;font-size:30.36px;color:#1d2130;">/</div>
<div class="t" style="left:539.69px;top:1263.75px;font-size:25.69px;color:#626c88;-webkit-text-stroke:0.5px #626c88;">Shipping fee rebate</div>
<svg class="b" style="left:774.20px;top:1266.00px;" width="24.00" height="24.00" viewBox="0 0 24.00 24.00"><circle cx="12.0" cy="12.0" r="11.0" fill="none" stroke="#6c7592" stroke-width="1.8"/><path d="M9.12 9.60 a2.88 2.88 0 1 1 4.80 1.44 c-.4 .9-1.3 1.3-1.8 2.1 -.3.4-.3.8-.3 1.4" fill="none" stroke="#6c7592" stroke-width="1.9" stroke-linecap="round"/><rect x="10.90" y="17.28" width="2.2" height="2.2" fill="#6c7592"/></svg>
<div class="t" style="left:1717.65px;top:1264.92px;font-size:25.60px;color:#78819c;letter-spacing:0.183px;">Rp200.000</div>
<div class="t" style="left:535.12px;top:1353.92px;font-size:25.60px;color:#1d2130;letter-spacing:-0.224px;">7244087747966256901</div>
<div class="b" style="left:809.20px;top:1348.40px;width:162.50px;height:38.90px;background:#fef6e6;border-radius:5px"></div>
<div class="t" style="left:825.60px;top:1353.68px;font-size:25.89px;color:#f3b13f;">Adjustment</div>
<div class="t" style="left:1089.98px;top:1353.92px;font-size:25.60px;color:#1d2130;letter-spacing:0.146px;">13/06/2023</div>
<div class="t" style="left:1407.00px;top:1352.90px;font-size:30.36px;color:#1d2130;">/</div>
<div class="t" style="left:1717.65px;top:1354.62px;font-size:25.60px;color:#1d2130;letter-spacing:-0.862px;">Rp100</div>
<div class="t" style="left:2022.00px;top:1352.90px;font-size:30.36px;color:#1d2130;">/</div>
<div class="t" style="left:539.69px;top:1418.55px;font-size:25.69px;color:#626c88;-webkit-text-stroke:0.5px #626c88;">Shipping fee rebate</div>
<svg class="b" style="left:774.20px;top:1420.80px;" width="24.00" height="24.00" viewBox="0 0 24.00 24.00"><circle cx="12.0" cy="12.0" r="11.0" fill="none" stroke="#6c7592" stroke-width="1.8"/><path d="M9.12 9.60 a2.88 2.88 0 1 1 4.80 1.44 c-.4 .9-1.3 1.3-1.8 2.1 -.3.4-.3.8-.3 1.4" fill="none" stroke="#6c7592" stroke-width="1.9" stroke-linecap="round"/><rect x="10.90" y="17.28" width="2.2" height="2.2" fill="#6c7592"/></svg>
<div class="t" style="left:1717.65px;top:1418.32px;font-size:25.60px;color:#78819c;letter-spacing:-0.862px;">Rp100</div>
<div class="b" style="left:2248.40px;top:1516.20px;width:47.40px;height:63.80px;border:2px solid #e1e4ee;border-radius:9px;box-sizing:border-box;background:#fff"></div>
<div class="b" style="left:2312.00px;top:1516.20px;width:47.40px;height:63.80px;border:2px solid #3e3ad8;border-radius:9px;box-sizing:border-box;background:#fff"></div>
<div class="b" style="left:2376.20px;top:1516.20px;width:47.40px;height:63.80px;border:2px solid #e1e4ee;border-radius:9px;box-sizing:border-box;background:#fff"></div>
<div class="b" style="left:2440.00px;top:1516.20px;width:47.40px;height:63.80px;border:2px solid #e1e4ee;border-radius:9px;box-sizing:border-box;background:#fff"></div>
<svg class="b" style="left:2264.00px;top:1529.00px;" width="16.00" height="22.00" viewBox="0 0 16.00 22.00"><path d="M12 2 L4 11 L12 20" fill="none" stroke="#adb3c6" stroke-width="2" stroke-linecap="round" stroke-linejoin="round"/></svg>
<svg class="b" style="left:2455.00px;top:1529.00px;" width="16.00" height="22.00" viewBox="0 0 16.00 22.00"><path d="M4 2 L12 11 L4 20" fill="none" stroke="#5f6682" stroke-width="2" stroke-linecap="round" stroke-linejoin="round"/></svg>
<svg class="b" style="left:2328.00px;top:1527.00px;" width="14.00" height="24.00" viewBox="0 0 14.00 24.00"><path d="M7.4 2 H12.2 V22.1 H7.4 V8.2 C6 9.6 4 10.6 1.6 11 V6.9 C4.4 6.1 6.2 4.4 7.4 2z" fill="#4a47d7"/></svg>
<div class="t" style="left:2391.47px;top:1524.88px;font-size:28.60px;color:#353a4f;">2</div>
<svg class="b" style="left:2451.00px;top:1289.00px;" width="67.00" height="51.00" viewBox="0 0 67.00 51.00"><rect x="4.5" y="4.5" width="21" height="21" rx="3" fill="none" stroke="#4e46c4" stroke-width="7"/><rect x="40.5" y="4.5" width="21" height="21" rx="3" fill="none" stroke="#4e46c4" stroke-width="7"/><rect x="4.5" y="39.5" width="21" height="21" rx="3" fill="none" stroke="#4e46c4" stroke-width="7"/><rect x="40.5" y="39.5" width="21" height="21" rx="3" fill="none" stroke="#4e46c4" stroke-width="7"/></svg>
<div class="b" style="left:2395.80px;top:1329.90px;width:296.20px;height:71.90px;background:#4c4bdb;border-radius:36px;box-shadow:0 4px 24px rgba(40,40,80,.16)"></div>
<svg class="b" style="left:2424.00px;top:1351.00px;" width="33.00" height="31.00" viewBox="0 0 33.00 31.00"><path d="M4 1.6 H26.6 c2 0 3.4 1.5 3.4 3.4 V21 c0 2-1.5 3.4-3.4 3.4 H24 L20.5 29.3 L19.3 24.4 H4 c-2 0-3.4-1.5-3.4-3.4 V5 C.6 3.1 2 1.6 4 1.6z" fill="#fff"/><circle cx="9" cy="13.2" r="1.6" fill="#4c4bdb"/><circle cx="15.8" cy="13.2" r="1.6" fill="#4c4bdb"/><circle cx="22.6" cy="13.2" r="1.6" fill="#4c4bdb"/></svg>
<div class="t" style="left:2468.68px;top:1351.82px;font-size:27.92px;color:#ffffff;font-weight:700;font-family:'Liberation Serif',serif;">Buyer Messages</div>
</body></html>
